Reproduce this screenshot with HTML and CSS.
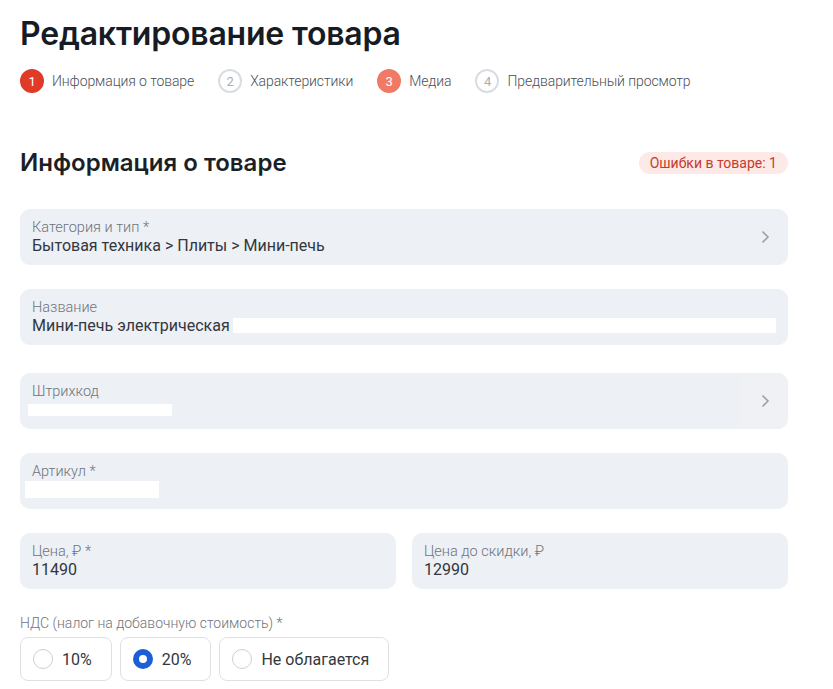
FILE: index.html
```html
<!DOCTYPE html>
<html lang="ru">
<head>
  <meta charset="UTF-8">
  <title>Редактирование товара</title>
  <link rel="stylesheet" href="styles.css">
</head>
<body>
  <div class="page">
    <h1 class="title">Редактирование товара</h1>

    <div class="steps">
      <div class="step active"><span class="num">1</span>Информация о товаре</div>
      <div class="step"><span class="num">2</span>Характеристики</div>
      <div class="step warn"><span class="num">3</span>Медиа</div>
      <div class="step"><span class="num">4</span>Предварительный просмотр</div>
    </div>

    <div class="section-head">
      <h2>Информация о товаре</h2>
      <span class="badge">Ошибки в товаре: 1</span>
    </div>

    <div class="fields">
      <div class="field">
        <div class="field-body">
          <div class="label">Категория и тип *</div>
          <div class="value">Бытовая техника &gt; Плиты &gt; Мини-печь</div>
        </div>
        <span class="arrow">
          <svg width="10" height="14" viewBox="0 0 10 14"><path d="M2.5 1.5 L8 7 L2.5 12.5" fill="none" stroke="#9ba1a9" stroke-width="1.6"/></svg>
        </span>
      </div>

      <div class="field">
        <div class="field-body">
          <div class="label">Название</div>
          <div class="value">Мини-печь электрическая<span class="hidden-text long"></span></div>
        </div>
      </div>

      <div class="field spaced">
        <div class="field-body">
          <div class="label">Штрихкод</div>
          <div class="value"><span class="hidden-text barcode"></span></div>
        </div>
        <span class="arrow boxed">
          <svg width="10" height="14" viewBox="0 0 10 14"><path d="M2.5 1.5 L8 7 L2.5 12.5" fill="none" stroke="#9ba1a9" stroke-width="1.6"/></svg>
        </span>
      </div>

      <div class="field">
        <div class="field-body">
          <div class="label">Артикул *</div>
          <div class="value"><span class="hidden-text sku"></span></div>
        </div>
      </div>

      <div class="field-row">
        <div class="field">
          <div class="field-body">
            <div class="label">Цена, ₽ *</div>
            <div class="value">11490</div>
          </div>
        </div>
        <div class="field">
          <div class="field-body">
            <div class="label">Цена до скидки, ₽</div>
            <div class="value">12990</div>
          </div>
        </div>
      </div>
    </div>

    <div class="vat">
      <div class="vat-label">НДС (налог на добавочную стоимость) *</div>
      <div class="vat-options">
        <label class="option"><span class="radio"></span>10%</label>
        <label class="option"><span class="radio checked"></span>20%</label>
        <label class="option"><span class="radio"></span>Не облагается</label>
      </div>
    </div>
  </div>
</body>
</html>
```

FILE: styles.css
```css
* { box-sizing: border-box; }
body {
  margin: 0;
  font-family: Roboto, "Noto Sans", sans-serif;
  color: #1f2329;
  background: #fff;
}
.page {
  width: 808px;
  padding: 14px 20px 0 20px;
}
.title {
  margin: 0;
  font-family: Inter, "Noto Sans", sans-serif;
  font-size: 32px;
  font-weight: 600;
  letter-spacing: -0.2px;
  line-height: 40px;
  color: #161b24;
}
.steps {
  display: flex;
  align-items: center;
  margin-top: 15px;
  font-size: 14px;
  font-weight: 300;
  letter-spacing: -0.1px;
  color: #4a4f57;
}
.step {
  display: flex;
  align-items: center;
  margin-right: 24px;
}
.num {
  width: 24px;
  height: 24px;
  border-radius: 50%;
  border: 2px solid #d9dde3;
  color: #a9aeb6;
  display: flex;
  align-items: center;
  justify-content: center;
  font-size: 13px;
  font-weight: 400;
  margin-right: 8px;
}
.step.active .num {
  background: #e03a28;
  border-color: #e03a28;
  color: #fff;
}
.step.warn .num {
  background: #f07a66;
  border-color: #f07a66;
  color: #fff;
}
.section-head {
  display: flex;
  justify-content: space-between;
  align-items: center;
  margin-top: 55px;
}
.section-head h2 {
  margin: 0;
  font-family: Inter, "Noto Sans", sans-serif;
  font-size: 24px;
  font-weight: 600;
  color: #1b1f27;
}
.badge {
  background: #fde9e6;
  color: #c73a2c;
  font-size: 14px;
  font-weight: 400;
  padding: 3px 11px;
  border-radius: 12px;
}
.fields {
  display: flex;
  flex-direction: column;
  gap: 24px;
  margin-top: 32px;
}
.field {
  display: flex;
  align-items: stretch;
  height: 56px;
  background: #edf0f5;
  border-radius: 10px;
  overflow: hidden;
}
.field.spaced {
  margin-top: 4px;
}
.field-body {
  flex: 1;
  min-width: 0;
  padding: 10px 12px 0 12px;
}
.label {
  font-size: 14.5px;
  font-weight: 300;
  color: #6f747c;
  line-height: 17px;
}
.value {
  font-size: 16px;
  line-height: 19px;
  color: #33373e;
  display: flex;
  align-items: center;
  white-space: nowrap;
}
.hidden-text {
  display: inline-block;
  background: #fff;
  height: 15px;
}
.hidden-text.long {
  flex: 1;
  margin-left: 3px;
}
.hidden-text.barcode {
  width: 144px;
  height: 12px;
  margin: 4px 0 0 -4px;
}
.hidden-text.sku {
  width: 134px;
  height: 17px;
  margin: 1px 0 0 -7px;
}
.arrow {
  width: 46px;
  display: flex;
  align-items: center;
  justify-content: center;
}
.arrow.boxed {
  background: #f0f1f4;
}
.field-row {
  display: flex;
  gap: 16px;
}
.field-row .field {
  flex: 1;
}
.vat {
  margin-top: 26px;
}
.vat-label {
  font-size: 14px;
  font-weight: 300;
  color: #6f747c;
}
.vat-options {
  display: flex;
  gap: 8px;
  margin-top: 6px;
}
.option {
  display: flex;
  align-items: center;
  height: 44px;
  padding: 0 19px 0 12px;
  border: 1px solid #dde0e5;
  border-radius: 8px;
  font-size: 16px;
  color: #33373e;
}
.radio {
  width: 20px;
  height: 20px;
  border-radius: 50%;
  border: 1.5px solid #ccd0d6;
  margin-right: 9px;
}
.radio.checked {
  border: 6px solid #1a5fd8;
}
```
